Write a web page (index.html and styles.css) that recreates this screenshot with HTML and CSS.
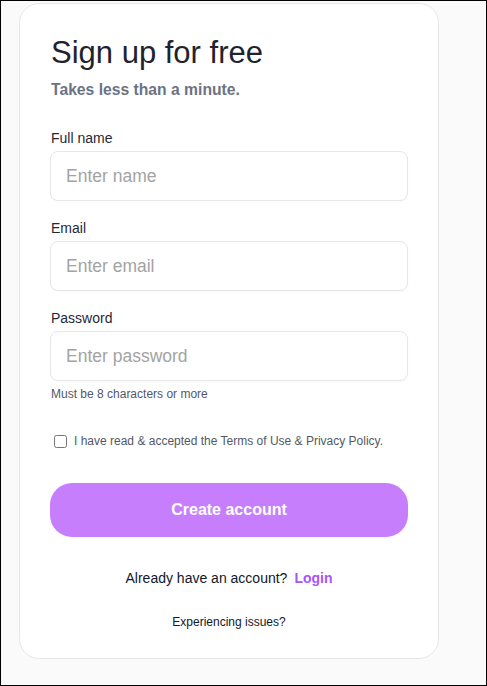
FILE: index.html
```html
<!DOCTYPE html>
<html lang="en">
<head>
<meta charset="utf-8">
<title>Sign up</title>
<link rel="stylesheet" href="styles.css">
</head>
<body>
<div class="frame">
  <div class="card">
    <h1 class="title">Sign up for free</h1>
    <p class="subtitle">Takes less than a minute.</p>
    <form class="form">
      <div class="field">
        <label class="label" for="name">Full name</label>
        <input class="input" id="name" type="text" placeholder="Enter name">
      </div>
      <div class="field">
        <label class="label" for="email">Email</label>
        <input class="input" id="email" type="email" placeholder="Enter email">
      </div>
      <div class="field">
        <label class="label" for="password">Password</label>
        <input class="input" id="password" type="password" placeholder="Enter password">
        <p class="hint">Must be 8 characters or more</p>
      </div>
      <label class="terms">
        <input class="checkbox" type="checkbox">
        <span>I have read &amp; accepted the Terms of Use &amp; Privacy Policy.</span>
      </label>
      <button class="submit" type="button">Create account</button>
    </form>
    <p class="login">Already have an account?<a class="login-link" href="#">Login</a></p>
    <p class="issues">Experiencing issues?</p>
  </div>
</div>
</body>
</html>
```

FILE: styles.css
```css
* { box-sizing: border-box; }
html, body { margin: 0; padding: 0; }
body {
  font-family: "Liberation Sans", Arial, sans-serif;
  color: #1f2937;
}
.frame {
  width: 487px;
  height: 686px;
  border: 1px solid #000;
  background: #fafafa;
  padding: 2px 0 0 18px;
}
.card {
  width: 420px;
  height: 656px;
  background: #fff;
  border: 1px solid #e5e7eb;
  border-radius: 20px;
  padding: 31px 30px 0 30px;
}
.title {
  margin: 0 0 0 1px;
  font-size: 31px;
  line-height: 36px;
  font-weight: 400;
  color: #1f2330;
}
.subtitle {
  margin: 7px 0 0 1px;
  font-size: 15.7px;
  line-height: 24px;
  font-weight: 700;
  color: #6b7383;
}
.form {
  display: flex;
  flex-direction: column;
  margin-top: 26px;
}
.field {
  display: flex;
  flex-direction: column;
  margin-bottom: 17px;
}
.label {
  font-size: 14px;
  line-height: 20px;
  margin: 0 0 3px 1px;
  color: #1f2937;
}
.input {
  height: 50px;
  border: 1px solid #e5e7eb;
  border-radius: 8px;
  padding: 0 15px;
  font-family: inherit;
  font-size: 17.5px;
  color: #1f2937;
  background: #fff;
  box-shadow: 0 1px 2px rgba(0,0,0,0.03);
  outline: none;
}
.input::placeholder { color: #a3a3a3; }
.hint {
  margin: 5px 0 0 1px;
  font-size: 12px;
  line-height: 16px;
  color: #525866;
}
.terms {
  display: flex;
  align-items: center;
  gap: 7px;
  margin: 14px 0 0 4px;
  font-size: 12px;
  line-height: 16px;
  color: #525866;
}
.checkbox {
  width: 13px;
  height: 13px;
  margin: 0;
}
.submit {
  margin-top: 34px;
  height: 54px;
  border: none;
  border-radius: 22px;
  background: #c77efc;
  color: #fff;
  font-family: inherit;
  font-size: 16px;
  font-weight: 700;
}
.login {
  margin: 31px 0 0;
  text-align: center;
  font-size: 14px;
  line-height: 20px;
  color: #111827;
}
.login-link {
  margin-left: 7px;
  color: #a855f7;
  font-weight: 700;
  text-decoration: none;
}
.issues {
  margin: 26px 0 0;
  text-align: center;
  font-size: 12px;
  line-height: 16px;
  color: #111827;
}
```
